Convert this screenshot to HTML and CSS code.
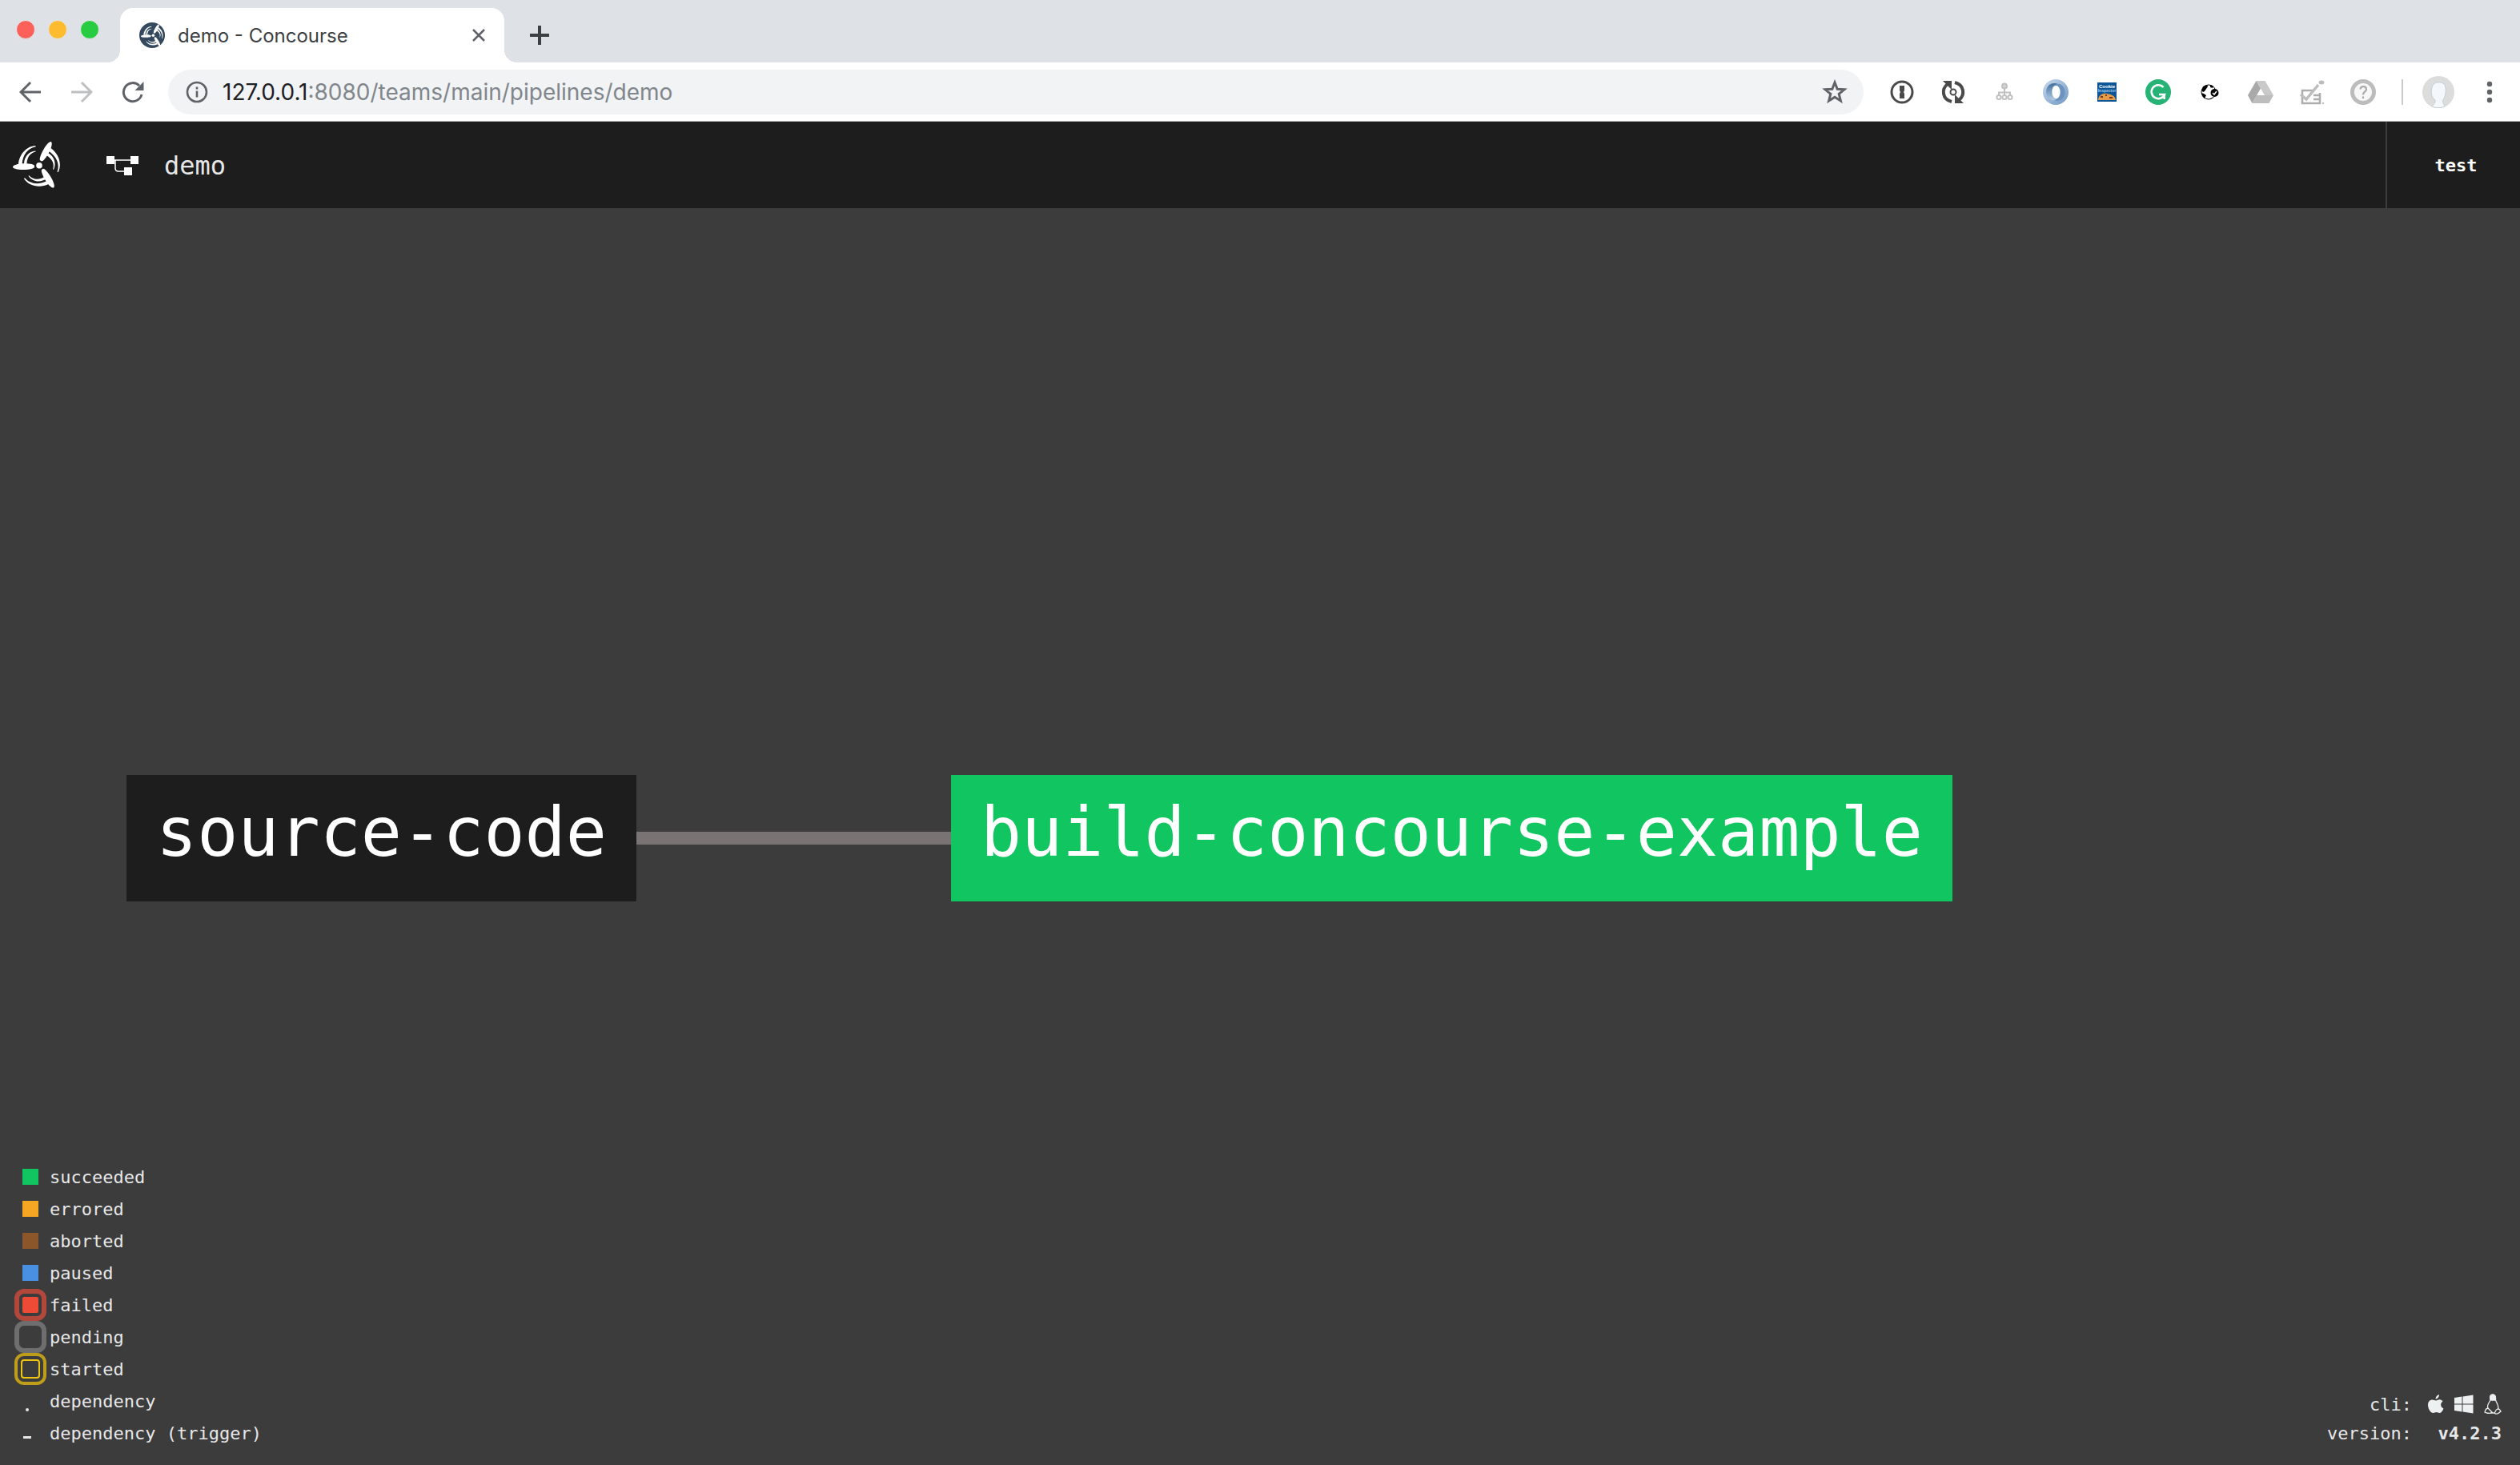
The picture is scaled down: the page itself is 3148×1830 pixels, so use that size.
FILE: index.html
```html
<!DOCTYPE html>
<html lang="en">
<head>
<meta charset="utf-8">
<title>demo - Concourse</title>
<link rel="stylesheet" href="styles.css">
</head>
<body>
<svg class="defs" aria-hidden="true">
  <linearGradient id="swirl-light" x1="0" y1="0" x2="1" y2="1"><stop offset="0" stop-color="#c9daeb"/><stop offset="1" stop-color="#6f97c4"/></linearGradient>
  <linearGradient id="swirl-dark" x1="0" y1="0" x2="0" y2="1"><stop offset="0" stop-color="#43709f"/><stop offset="1" stop-color="#b4cbe3"/></linearGradient>
  <symbol id="propeller" viewBox="0 0 60 60">
    <g id="blade">
      <path d="M27 31C26.500 29.500 23 28.200 14 28.200C6 28.200 0 30.500 0 32.500C0 34.500 5 36 13 36C21 36 27 34.500 27 32.500Z"/>
      <path d="M7 29C8 17 17 6.500 28.500 6V7.300C19 9 12.500 17 11.500 29Z"/>
      <path d="M14 29C14 20 20 13 28.500 12.500V13.500C21.500 15 17.500 21 17.500 29Z"/>
    </g>
    <use href="#blade" transform="rotate(120 33 30.700)"/>
    <use href="#blade" transform="rotate(240 33 30.700)"/>
    <circle cx="33" cy="30.700" r="3.800"/>
  </symbol>
</svg>

<header class="browser">
  <div class="tabstrip">
    <div class="lights"><i class="red"></i><i class="amber"></i><i class="green"></i></div>
    <div class="tab">
      <span class="favicon"><svg viewBox="0 0 60 60"><use href="#propeller"/></svg></span>
      <span class="tab-title">demo - Concourse</span>
      <button class="plain" aria-label="Close tab"><svg width="16" height="16" viewBox="0 0 16 16" stroke="#5f6368" stroke-width="2.500"><path d="M1 1L15 15M15 1L1 15"/></svg></button>
    </div>
    <button class="plain new-tab" aria-label="New tab"><svg width="24" height="24" viewBox="0 0 24 24" stroke="#3c4043" stroke-width="4"><path d="M12 0V24M0 12H24"/></svg></button>
  </div>
  <div class="toolbar">
    <nav class="nav">
      <button class="plain" aria-label="Back"><svg width="28" height="28" viewBox="0 0 28 28" fill="none" stroke="#5f6368" stroke-width="3"><path d="M27 14H3M14 2L2 14L14 26"/></svg></button>
      <button class="plain" aria-label="Forward"><svg width="28" height="28" viewBox="0 0 28 28" fill="none" stroke="#bdbfc1" stroke-width="3"><path d="M1 14H25M14 2L26 14L14 26"/></svg></button>
      <button class="plain" aria-label="Reload"><svg width="28" height="28" viewBox="0 0 28 28" fill="none" stroke="#5f6368" stroke-width="3"><path d="M25 17A11.500 11.500 0 1 1 22 6"/><path d="M27.500 1V12H16.500Z" fill="#5f6368" stroke="none"/></svg></button>
    </nav>
    <div class="omnibox">
      <svg width="28" height="28" viewBox="0 0 28 28" fill="none" stroke="#5f6368" stroke-width="2.600"><circle cx="14" cy="14" r="12"/><path d="M14 12.500V20.500M14 7.500V10.500"/></svg>
      <a class="url" href="#"><b>127.0.0.1</b>:8080/teams/main/pipelines/demo</a>
      <button class="plain" aria-label="Bookmark"><svg width="32" height="32" viewBox="0 0 32 32" fill="none" stroke="#5f6368" stroke-width="3"><path d="M16 4L19.200 12.200L28 12.800L21.200 18.400L23.400 27L16 22.300L8.600 27L10.800 18.400L4 12.800L12.800 12.200Z"/></svg></button>
    </div>
    <div class="extensions">
      <button class="plain" aria-label="Password manager"><svg width="32" height="32" viewBox="0 0 32 32" fill="none" stroke="#4a4a4a"><circle cx="16" cy="16" r="13" stroke-width="3"/><path d="M13 8H19V14L18 16L19 18V24H13V18L14 16L13 14Z" fill="#4a4a4a" stroke="none"/></svg></button>
      <button class="plain" aria-label="Refresh tool"><svg width="32" height="32" viewBox="0 0 32 32" fill="none" stroke="#4a4a4a" stroke-width="4"><circle cx="16" cy="16" r="3.500" stroke-width="2"/><path d="M9 6C1 12 2 25 14 28M18 4C30 7 31 20 23 26"/><path d="M3 2H14V13ZM18 19V30H29Z" fill="#4a4a4a" stroke="none"/></svg></button>
      <button class="plain" aria-label="Site map"><svg width="32" height="32" viewBox="0 0 32 32" fill="none" stroke="#c0c0c0" stroke-width="2"><circle cx="16" cy="8.500" r="3" fill="#d4d4d4"/><path d="M16 12V20M9 20V16.500H23V20"/><circle cx="9" cy="22.500" r="2.600"/><circle cx="16" cy="22.500" r="2.600"/><circle cx="23" cy="22.500" r="2.600"/></svg></button>
      <button class="plain" aria-label="JSON viewer"><svg width="32" height="32" viewBox="0 0 32 32"><circle cx="16" cy="16" r="16" fill="url(#swirl-light)"/><path d="M16 5C7 4 2 12 5 20C8 27 15 28 19 24C14 25 11 21 11 16S13 7 19 6Z" fill="url(#swirl-dark)"/><path d="M16 27C25 28 29 20 27 12C24 5 18 4 14 8C19 8 22 12 22 16S20 25 14 26Z" fill="#6b93be"/><ellipse cx="16.500" cy="16" rx="5" ry="8" fill="#fff"/></svg></button>
      <button class="plain" aria-label="Cookie Inspector"><svg width="32" height="32" viewBox="0 0 32 32"><path d="M4 4H28V28H4Z" fill="#0d5596"/><path d="M5 26C5 20 11 17 16 18S26 20 27 26Z" fill="#e79a48"/><path d="M8 22H11M14 20H16M19 23H23" stroke="#733d20" stroke-width="2"/><text class="cookie" x="16" y="11" text-anchor="middle">Cookie</text><text class="cookie small" x="16" y="16" text-anchor="middle">Inspector</text></svg></button>
      <button class="plain" aria-label="Grammar checker"><svg width="32" height="32" viewBox="0 0 32 32" fill="none" stroke="#fff" stroke-width="2.600"><circle cx="16" cy="16" r="16" fill="#27b376" stroke="none"/><path d="M22.500 10A8.500 8.500 0 1 0 24 19H17M23.700 18V25"/></svg></button>
      <button class="plain" aria-label="Site checker"><svg width="32" height="32" viewBox="0 0 32 32" fill="none"><circle cx="15" cy="16" r="9" stroke="#000" stroke-width="1"/><path d="M6.500 14L8 9L13 7L14 9L12 12L10 15L8 16ZM17 7L21 8.500L20 11L17 10ZM6 17L9 18L12 20L10 24L8 22ZM17 24L21 22L17 25Z" fill="#000"/><circle cx="22.500" cy="17" r="5" fill="#000"/><path d="M20 17L22 19L25 15" stroke="#fff" stroke-width="1.500"/></svg></button>
      <button class="plain" aria-label="Drive"><svg width="32" height="32" viewBox="0 0 32 32"><path d="M10.500 2H21.500L32 20H21Z" fill="#c9c9c9"/><path d="M10.500 2L16 11.500L5.500 30L0 20Z" fill="#a9a9a9"/><path d="M11 20H32L26.500 30H5.500Z" fill="#bdbdbd"/></svg></button>
      <button class="plain" aria-label="Checklist"><svg width="32" height="32" viewBox="0 0 32 32" fill="none" stroke="#adadad" stroke-width="2.500"><path d="M18 14H4V30H26V17M18 20H25M18 25H25"/><path d="M2 19L9 25L24 7" stroke="#bdbdbd" stroke-width="3.500"/><ellipse cx="28" cy="4" rx="3.500" ry="2.500" fill="#bdbdbd" stroke="none"/><circle cx="30" cy="30" r="1.200" fill="#bdbdbd" stroke="none"/></svg></button>
      <button class="plain" aria-label="Help"><svg width="32" height="32" viewBox="0 0 32 32" fill="none" stroke="#bcbcbc"><circle cx="16" cy="16" r="13.500" stroke-width="5" fill="#f7f7f7"/><path d="M12.500 12.500C13 8 20 8 20 12.500C20 15.500 16 15.500 16 19.500M16 21.500V24" stroke="#aaa" stroke-width="2.200"/></svg></button>
    </div>
    <div class="profile">
      <button class="plain" aria-label="Profile"><svg width="40" height="40" viewBox="0 0 40 40"><circle cx="20" cy="20" r="20" fill="#dcdcdc"/><path d="M12 38L16 33V30C10 26 10 16 14 10C18 7 25 7 28 11C31 20 28 27 25 31L28 38C23 40 17 40 12 38Z" fill="#f4f8fc" stroke="#c5ced8"/></svg></button>
      <button class="plain" aria-label="Menu"><svg width="8" height="28" viewBox="0 0 8 28" fill="#5f6368"><circle cx="4" cy="4" r="3.200"/><circle cx="4" cy="14" r="3.200"/><circle cx="4" cy="24" r="3.200"/></svg></button>
    </div>
  </div>
</header>

<div class="topbar">
  <a class="logo" href="#" aria-label="Concourse"><svg width="60" height="60" viewBox="0 0 60 60" fill="#fff"><use href="#propeller"/></svg></a>
  <a class="crumb" href="#">
    <svg width="40" height="26" viewBox="0 0 40 26"><path d="M8 6H32M11 6V16Q11 20 15 20H24" fill="none" stroke="#fff" stroke-width="1.500"/><path d="M0 1H10V11H0ZM30 1H40V11H30ZM22 15H32V25H22Z" fill="#fff"/></svg>
    <span>demo</span>
  </a>
  <button class="user">test</button>
</div>

<main class="canvas">
  <div class="pipeline">
    <a class="node resource" href="#">source-code</a>
    <span class="edge"></span>
    <a class="node job" href="#">build-concourse-example</a>
  </div>
  <footer class="footer">
    <ul class="legend">
      <li><i class="swatch succeeded"></i>succeeded</li>
      <li><i class="swatch errored"></i>errored</li>
      <li><i class="swatch aborted"></i>aborted</li>
      <li><i class="swatch paused"></i>paused</li>
      <li><i class="swatch ring failed"></i>failed</li>
      <li><i class="swatch ring pending"></i>pending</li>
      <li><i class="swatch ring started"></i>started</li>
      <li><i class="dot"></i>dependency</li>
      <li><i class="dash"></i>dependency (trigger)</li>
    </ul>
    <dl class="info">
      <dt>cli:</dt>
      <dd>
        <a href="#" aria-label="macOS"><svg width="20" height="24" viewBox="0 0 20 24" fill="#ecf0f1"><path d="M14 0C14 3 12 5.500 9.500 5.500C9.500 3 11.500 .5 14 0ZM18.500 8.500C15 11 15.500 15.500 19.500 17.500C18 21 16.500 23 14.500 23C13 23 12 22 10.500 22S8 23 6.500 23C3 23 0 17 0 13C0 8.500 3 6.500 5.500 6.500C7.500 6.500 8.500 7.500 10 7.500S13 6.300 14.500 6.300C16 6.300 17.500 7 18.500 8.500Z"/></svg></a>
        <a href="#" aria-label="Windows"><svg width="24" height="24" viewBox="0 0 24 24" fill="#ecf0f1"><path d="M0 4L9.500 2.600V11.500H0ZM10.500 2.400L23.500 .5V11.500H10.500ZM0 12.500H9.500V21.400L0 20ZM10.500 12.500H23.500V23.500L10.500 21.600Z"/></svg></a>
        <a href="#" aria-label="Linux"><svg width="22" height="26" viewBox="0 0 22 26" fill="none" stroke="#ecf0f1" stroke-width="1.300"><path d="M8 8C7 3 8 1 11 1S15 4 14.500 8C16 12 19 15 17.500 20M8 8C6 12 3 15 5 18"/><path d="M5 18L10 23C7 26 4 24 1 23C2 21 1 19 5 18ZM17 19C20 18 19 20 21 22C18 25 15 26 13 24C15 22 14 20 17 19ZM9 24H14"/><path d="M8 3L11 1L14 3L14 8L8.500 8Z" fill="#ecf0f1"/></svg></a>
      </dd>
      <dt>version:</dt>
      <dd><b>v4.2.3</b></dd>
    </dl>
  </footer>
</main>
</body>
</html>
```

FILE: styles.css
```css
*, *::before, *::after { box-sizing: border-box; }

body {
  margin: 0;
  min-height: 100vh;
  display: flex;
  flex-direction: column;
  background: #3d3c3c;
  color: #e6e7e8;
  font-family: "DejaVu Sans Mono", monospace;
  font-size: 22px;
}

a { color: inherit; text-decoration: none; }
svg { display: block; flex: none; }
.defs { position: absolute; width: 0; height: 0; }

.plain {
  padding: 0;
  border: 0;
  background: none;
  flex: none;
}

/* Browser window */
.browser {
  font-family: Inter, sans-serif;
  background: #fff;
  border-bottom: 1px solid #b5b7b9;
}

.tabstrip {
  height: 78px;
  padding-left: 20px;
  display: flex;
  align-items: flex-end;
  background: #dee1e6;
}

.lights { display: flex; gap: 16px; width: 130px; padding-bottom: 29px; }
.lights i { width: 24px; height: 24px; border-radius: 50%; border: 1px solid; }
.red { background: #fc605b; border-color: #e2504a; }
.amber { background: #fdbc2f; border-color: #dfa023; }
.green { background: #28cc41; border-color: #1eab2f; }

.tab {
  position: relative;
  width: 480px;
  height: 68px;
  padding: 0 24px;
  display: flex;
  align-items: center;
  gap: 16px;
  background: #fff;
  border-radius: 16px 16px 0 0;
}

/* Flared feet of the active tab */
.tab::before, .tab::after {
  content: "";
  position: absolute;
  bottom: 0;
  width: 16px;
  height: 16px;
}
.tab::before { left: -16px; background: radial-gradient(circle at 0 0, transparent 16px, #fff 16px); }
.tab::after { right: -16px; background: radial-gradient(circle at 100% 0, transparent 16px, #fff 16px); }

.favicon {
  width: 32px;
  height: 32px;
  padding: 2px;
  border-radius: 50%;
  background: #34495e;
  fill: #fff;
}
.tab-title { flex: 1; font-size: 24px; color: #3c4043; white-space: nowrap; }
.new-tab { margin: 0 0 22px 32px; }

.toolbar {
  height: 73px;
  padding-left: 24px;
  display: flex;
  align-items: center;
}
.nav { display: flex; gap: 36px; width: 186px; }

.omnibox {
  flex: 1;
  height: 56px;
  padding: 0 20px 0 22px;
  display: flex;
  align-items: center;
  gap: 18px;
  border-radius: 28px;
  background: #f1f3f4;
}
.url { flex: 1; font-size: 28px; color: #80868b; }
.url b { font-weight: 400; color: #202124; }

.extensions { display: flex; gap: 32px; padding: 0 32px; }
.cookie { font: bold 6px "Liberation Sans", sans-serif; fill: #fff; }
.cookie.small { font-size: 5px; fill: #9fc6ea; }

.profile {
  height: 32px;
  padding: 0 34px 0 24px;
  display: flex;
  align-items: center;
  gap: 40px;
  border-left: 2px solid #c8cacd;
}

/* Concourse top bar */
.topbar {
  height: 108px;
  display: flex;
  align-items: center;
  background: #1e1d1d;
}
.logo { padding: 0 57px 0 16px; }
.crumb { flex: 1; display: flex; align-items: center; gap: 32px; padding-top: 2px; font-size: 32px; }
.user {
  align-self: stretch;
  width: 168px;
  padding: 0 0 0 6px;
  border: 0;
  border-left: 2px solid #3d3c3c;
  background: none;
  color: #fff;
  font: bold 22px "DejaVu Sans Mono", monospace;
}

/* Pipeline graph */
.canvas { flex: 1; display: flex; flex-direction: column; }
.pipeline {
  flex: 1;
  padding: 384px 0 0 158px;
  display: flex;
  align-items: center;
}
.node {
  height: 158px;
  padding: 0 37px;
  color: #fff;
  font-size: 85px;
  line-height: 144px;
  white-space: nowrap;
}
.resource { background: #1e1d1d; }
.job { background: #11c560; }
.edge { width: 393px; height: 16px; background: #7a7373; }

/* Legend and version */
.footer {
  display: flex;
  justify-content: space-between;
  align-items: flex-end;
  padding: 0 23px 20px 18px;
}
.legend { margin: 0; padding: 0; list-style: none; }
.legend li { height: 40px; display: flex; align-items: center; gap: 4px; }
.swatch { width: 20px; height: 20px; margin: 0 10px; }
.succeeded { background: #11c560; }
.errored { background: #f5a623; }
.aborted { background: #8b572a; }
.paused { background: #4a90e2; }
.ring { width: 40px; height: 40px; margin: 0; padding: 4px; border-radius: 12px; background-clip: content-box; }
.failed { border: 6px solid #b2473c; background-color: #ed4b35; }
.pending { border: 6px solid #6e6e6e; }
.started { border: 4px solid #bd9d19; }
.started::before { content: ""; display: block; width: 24px; height: 24px; border: 2px solid #f1c40f; border-radius: 4px; }
.dot { width: 4px; height: 4px; margin: 22px 22px 0 14px; border-radius: 50%; background: #e6e7e8; }
.dash { width: 10px; height: 3px; margin: 10px 19px 0 11px; background: #e6e7e8; }

.info {
  margin: 0 0 2px;
  display: grid;
  grid-template-columns: auto auto;
  grid-auto-rows: 36px;
  align-items: center;
  column-gap: 20px;
}
.info dt { text-align: right; }
.info dd { margin: 0; display: flex; align-items: center; justify-content: flex-end; gap: 13px; }
```
